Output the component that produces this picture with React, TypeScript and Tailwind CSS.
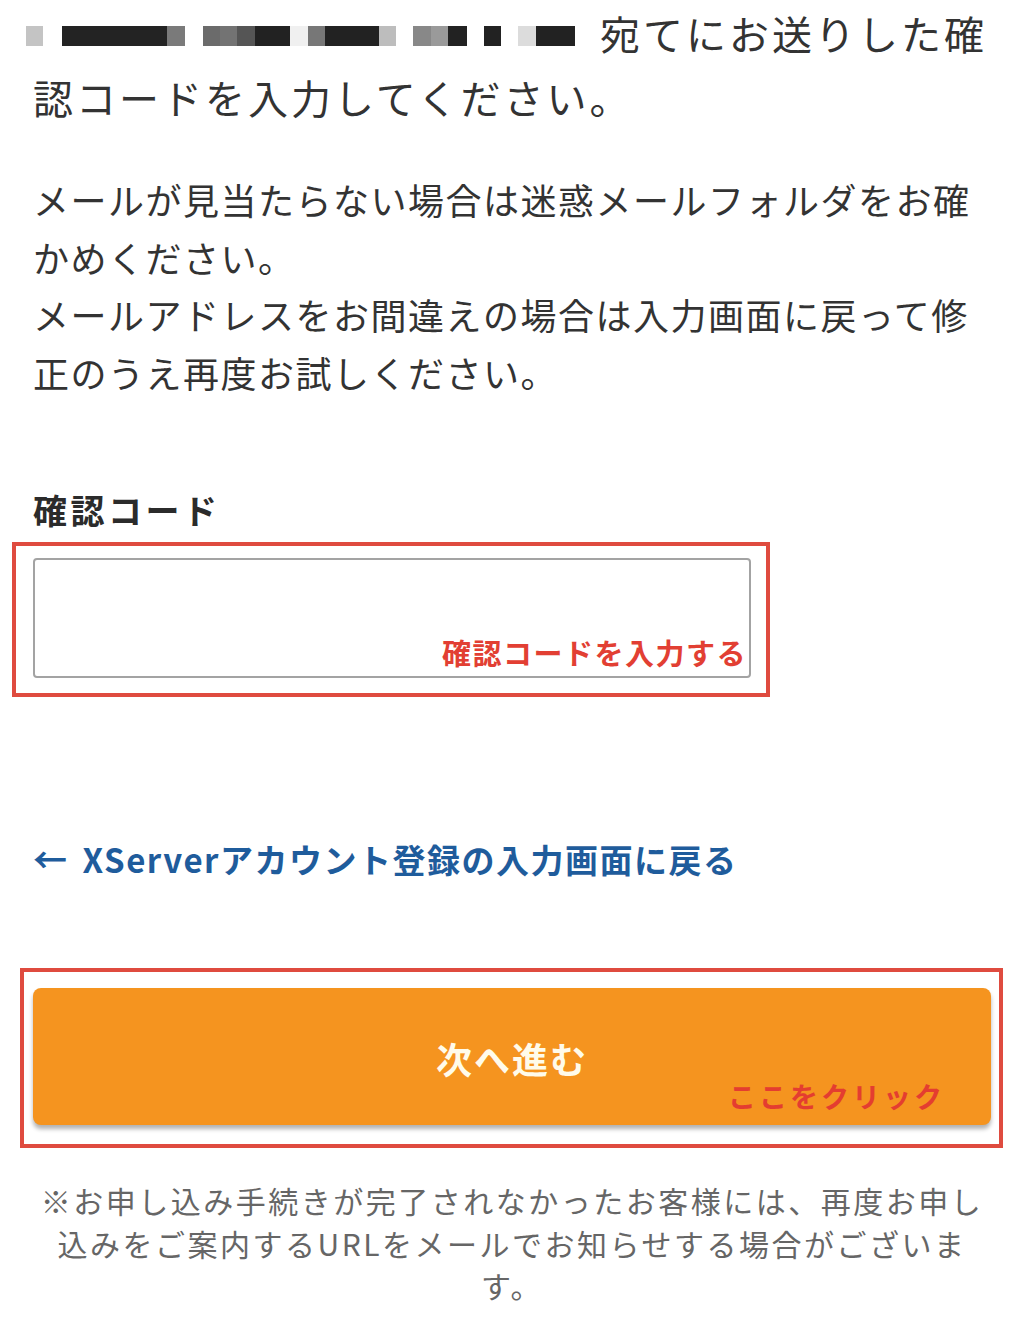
import React from "react";

const mosaic: [number, string][] = [
  [17, "#c4c4c4"],
  [19, "transparent"],
  [105, "#232323"],
  [18, "#7a7a7a"],
  [18, "transparent"],
  [17, "#6b6b6b"],
  [17, "#737373"],
  [18, "#555555"],
  [35, "#222222"],
  [18, "#f0f0f0"],
  [17, "#777777"],
  [54, "#222222"],
  [17, "#bdbdbd"],
  [17, "transparent"],
  [18, "#888888"],
  [17, "#9a9a9a"],
  [19, "#222222"],
  [17, "transparent"],
  [17, "#222222"],
  [17, "transparent"],
  [18, "#dcdcdc"],
  [39, "#222222"],
];

export default function App() {
  return (
    <div className="w-[1024px] min-h-[1322px] bg-white px-[33px] pt-px font-['Noto_Sans_CJK_JP','Noto_Sans',sans-serif]">
      {/* intro */}
      <div className="text-[40px] leading-[64px] tracking-[3px] text-[#333]">
        <div className="flex items-start h-[64px] whitespace-nowrap">
          <div className="flex mt-[25px] -ml-[7px] mr-[25px] h-[20px]">
            {mosaic.map(([w, c], i) => (
              <div key={i} className="h-full" style={{ width: w, backgroundColor: c }} />
            ))}
          </div>
          <span>宛てにお送りした確</span>
        </div>
        <div className="whitespace-nowrap">認コードを入力してください。</div>
      </div>

      <div className="mt-[42px] text-[36px] leading-[57.5px] tracking-[1.5px] text-[#333] whitespace-nowrap">
        <div>メールが見当たらない場合は迷惑メールフォルダをお確</div>
        <div>かめください。</div>
        <div>メールアドレスをお間違えの場合は入力画面に戻って修</div>
        <div>正のうえ再度お試しください。</div>
      </div>

      {/* code field */}
      <h2 className="mt-[89px] text-[34px] leading-[40px] font-bold tracking-[3.5px] text-[#2b2b2b]">
        確認コード
      </h2>
      <div className="mt-[12px] -ml-[21px] w-fit border-4 border-[#df4b3f] pt-[12px] pl-[17px] pr-[15px] pb-[15px]">
        <div className="w-[718px] h-[120px] rounded-[4px] border-2 border-[#a3a3a3] flex items-end justify-end pr-[2px] pb-[4px]">
          <span className="text-[29px] leading-[40px] font-bold tracking-[1.5px] text-[#e23f33]">
            確認コードを入力する
          </span>
        </div>
      </div>

      {/* back link */}
      <a className="mt-[143px] flex items-center gap-[14px] h-[40px] text-[33px] font-bold tracking-[1.5px] text-[#1f5c9c] whitespace-nowrap">
        <span className="text-[34px] -mt-[4px]">←</span>
        <span>XServerアカウント登録の入力画面に戻る</span>
      </a>

      {/* submit */}
      <div className="mt-[88px] -ml-[13px] w-[983px] border-4 border-[#df4b3f] pt-[16px] pl-[9px] pr-[8px] pb-[19px]">
        <button className="relative w-[958px] h-[137px] rounded-[8px] bg-[#f5941f] shadow-[0_4px_4px_rgba(0,0,0,0.3)] flex flex-col items-center">
          <span className="mt-[48px] text-[36px] leading-[44px] font-bold tracking-[2px] text-[#fffbea]">
            次へ進む
          </span>
          <span className="absolute right-[46px] top-[88px] text-[28px] leading-[40px] font-bold tracking-[3px] text-[#e43d30]">
            ここをクリック
          </span>
        </button>
      </div>

      <p className="mt-[31px] text-center text-[30px] leading-[42.5px] tracking-[2.5px] text-[#666] whitespace-nowrap">
        ※お申し込み手続きが完了されなかったお客様には、再度お申し
        <br />
        込みをご案内するURLをメールでお知らせする場合がございま
        <br />
        す。
      </p>
    </div>
  );
}
